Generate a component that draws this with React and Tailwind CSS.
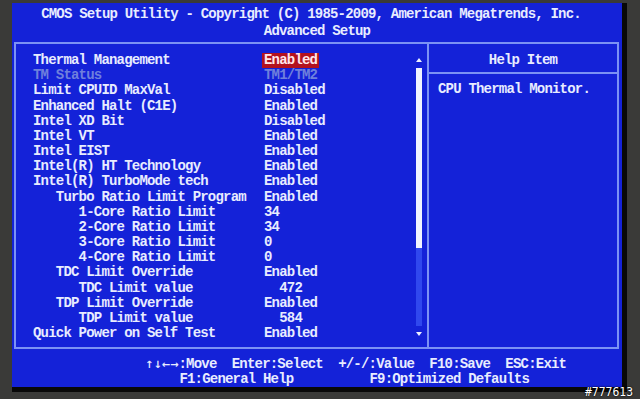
import React from "react";

/* BIOS "Advanced Setup" screen, photographed on a monitor */

const rows = [
  { label: "Thermal Management", value: "Enabled", active: true },
  { label: "TM Status", value: "TM1/TM2", dim: true },
  { label: "Limit CPUID MaxVal", value: "Disabled" },
  { label: "Enhanced Halt (C1E)", value: "Enabled" },
  { label: "Intel XD Bit", value: "Disabled" },
  { label: "Intel VT", value: "Enabled" },
  { label: "Intel EIST", value: "Enabled" },
  { label: "Intel(R) HT Technology", value: "Enabled" },
  { label: "Intel(R) TurboMode tech", value: "Enabled" },
  { label: "   Turbo Ratio Limit Program", value: "Enabled" },
  { label: "      1-Core Ratio Limit", value: "34" },
  { label: "      2-Core Ratio Limit", value: "34" },
  { label: "      3-Core Ratio Limit", value: "0" },
  { label: "      4-Core Ratio Limit", value: "0" },
  { label: "   TDC Limit Override", value: "Enabled" },
  { label: "      TDC Limit value", value: "  472" },
  { label: "   TDP Limit Override", value: "Enabled" },
  { label: "      TDP Limit value", value: "  584" },
  { label: "Quick Power on Self Test", value: "Enabled" },
];

const Arrow = ({ down }) => (
  <svg width="6" height="9" viewBox="0 0 6 9" className="block">
    {down ? <polygon points="0,3 6,3 3,7" fill="#eef1ff" /> : <polygon points="0,6 6,6 3,2" fill="#eef1ff" />}
  </svg>
);

const SettingRow = ({ label, value, active, dim }) => (
  <div className={`flex leading-[15.17px] whitespace-pre ${dim ? "text-[#6f80dc]" : "text-[#e8ecff]"}`}>
    <span className="w-[231px] shrink-0">{label}</span>
    <span className={active ? "-ml-[2px] px-[2px] bg-[#b3121f] text-[#ffe6ea]" : ""}>{value}</span>
  </div>
);

export default function App() {
  return (
    <div
      className="relative w-[640px] h-[399px] overflow-hidden bg-[#3a3a38] pt-[3px] pl-[12px]"
      style={{ fontFamily: '"Liberation Mono", "DejaVu Sans Mono", monospace' }}
    >
      {/* screen, with the dark shadow on right / bottom */}
      <div className="w-[615px] h-[389px] border-r-[5px] border-b-[5px] border-[#080808] bg-[#1422d8] flex flex-col text-[14px] font-bold tracking-[-0.8px] text-[#e8ecff]">
        {/* title */}
        <div className="pt-[3px] leading-[16px] whitespace-pre">
          <div className="text-center pr-[12px]">CMOS Setup Utility - Copyright (C) 1985-2009, American Megatrends, Inc.</div>
          <div className="text-center pt-[1px]">Advanced Setup</div>
        </div>

        {/* main box */}
        <div className="mt-[3px] ml-[2px] w-[605px] h-[307px] border-2 border-[#7c92f4] flex">
          {/* settings list + scrollbar */}
          <div className="w-[411px] flex">
            <div className="flex-1 pt-[9px] pl-[17px]">
              {rows.map((r) => (
                <SettingRow key={r.label} {...r} />
              ))}
            </div>
            <div className="w-[6px] mr-[5px] pt-[12px] flex flex-col gap-[3px]">
              <Arrow />
              <div className="h-[258px] flex flex-col bg-[#3048ee]">
                <div className="h-[180px] bg-[#f2f4ff]" />
              </div>
              <Arrow down />
            </div>
          </div>

          {/* help panel */}
          <div className="flex-1 border-l-2 border-[#7c92f4] flex flex-col">
            <div className="h-[30px] flex items-center justify-center border-b-2 border-[#7c92f4] pt-[4px]">Help Item</div>
            <div className="pt-[7px] pl-[9px] leading-[16px]">CPU Thermal Monitor.</div>
          </div>
        </div>

        {/* key legend */}
        <div className="mt-[8px] pl-[137px] leading-[15px] whitespace-pre">
          <div className="flex items-center -ml-[4px]">
            <span
              className="shrink-0 text-[10px] leading-[15px] tracking-normal"
              style={{ fontFamily: '"DejaVu Sans", sans-serif' }}
            >
              ↑↓←→
            </span>
            <span>{":Move  Enter:Select  +/-/:Value  F10:Save  ESC:Exit"}</span>
          </div>
          <div>{"    F1:General Help          F9:Optimized Defaults"}</div>
        </div>
      </div>

      {/* photo watermark */}
      <div
        className="absolute right-[7px] bottom-[1px] text-[11.4px] leading-[12px] text-white"
        style={{ fontFamily: '"DejaVu Sans Mono", monospace', textShadow: "0 0 2px #000, 0 0 1px #000" }}
      >
        #777613
      </div>
    </div>
  );
}
